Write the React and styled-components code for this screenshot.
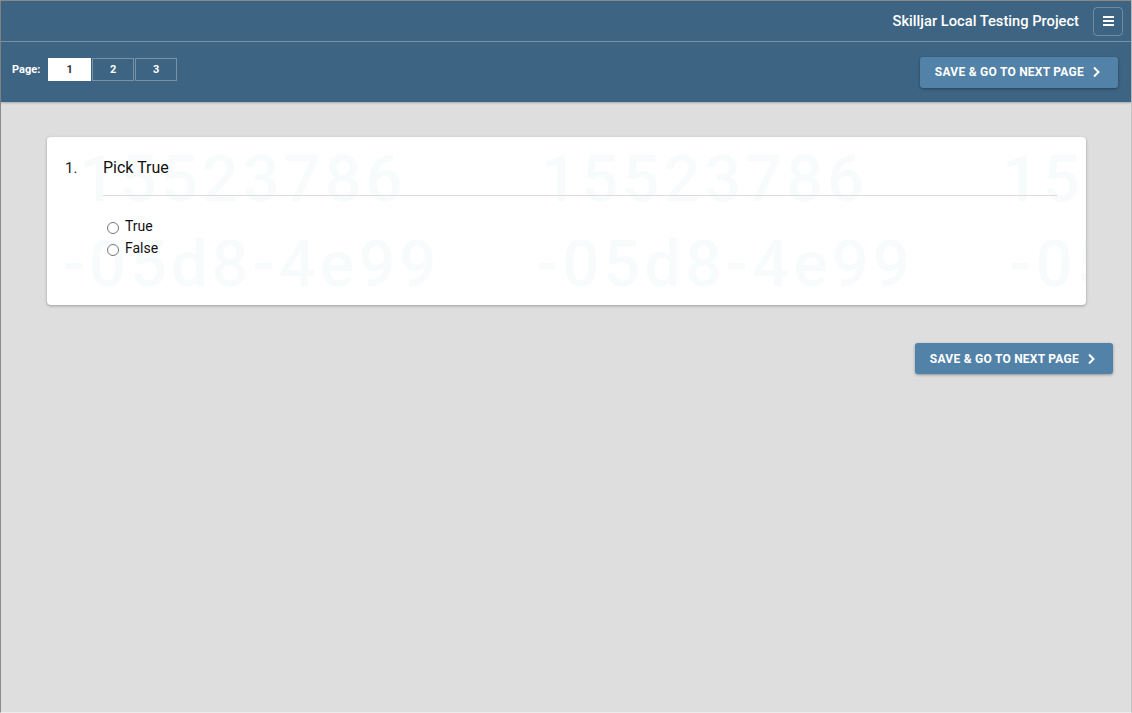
import React from 'react';
import styled, { createGlobalStyle } from 'styled-components';

const GlobalStyle = createGlobalStyle`
  html, body {
    margin: 0;
    padding: 0;
    background: #dedede;
  }
  body {
    font-family: Roboto, "Liberation Sans", Arial, sans-serif;
  }
`;

const Frame = styled.div`
  box-sizing: border-box;
  min-height: 713px;
  border-top: 1px solid #8c8c8c;
  border-left: 1px solid #8c8c8c;
  border-right: 1px solid #c4c4c4;
  border-bottom: 1px solid #ececec;
  background: #dedede;
`;

const Header = styled.header`
  background: #3d6483;
  box-shadow: 0 1px 2px rgba(0, 0, 0, 0.25);
`;

const TopBar = styled.div`
  height: 40px;
  display: flex;
  align-items: center;
  justify-content: flex-end;
  gap: 14px;
  padding-right: 8px;
  border-bottom: 1px solid #7392aa;
`;

const Title = styled.div`
  color: #fff;
  font-size: 14.7px;
  font-weight: 500;
`;

const MenuButton = styled.button`
  box-sizing: border-box;
  width: 30px;
  height: 29px;
  display: flex;
  flex-direction: column;
  align-items: center;
  justify-content: center;
  gap: 2px;
  padding: 0;
  background: transparent;
  border: 1px solid rgba(255, 255, 255, 0.25);
  border-radius: 4px;
  span {
    display: block;
    width: 11px;
    height: 2px;
    background: #fff;
  }
`;

const SubBar = styled.div`
  height: 60px;
  display: flex;
  align-items: center;
  justify-content: space-between;
  padding: 0 13px 0 11px;
`;

const Pager = styled.div`
  display: flex;
  align-items: center;
  margin-top: -6px;
`;

const PagerLabel = styled.span`
  color: #fff;
  font-size: 11px;
  font-weight: 700;
  margin-right: 8px;
`;

const PageButton = styled.button`
  box-sizing: border-box;
  width: ${(p) => (p.$active ? 43 : 42)}px;
  height: 23px;
  margin-right: 1px;
  padding: 0;
  font-family: inherit;
  font-size: 11px;
  font-weight: 700;
  color: ${(p) => (p.$active ? '#333' : '#fff')};
  background: ${(p) => (p.$active ? '#fff' : 'transparent')};
  border: 1px solid ${(p) => (p.$active ? '#fff' : 'rgba(255, 255, 255, 0.3)')};
`;

const SaveButton = styled.button`
  box-sizing: border-box;
  height: 31px;
  padding: 0 17px 0 15px;
  display: flex;
  align-items: center;
  gap: 8px;
  font-family: inherit;
  font-size: 12px;
  font-weight: 700;
  letter-spacing: 0.25px;
  color: #fff;
  text-transform: uppercase;
  background: #5282a7;
  border: none;
  border-radius: 3px;
  box-shadow: 0 1px 3px rgba(0, 0, 0, 0.35);
`;

const Main = styled.main`
  padding: 35px 45px 0 46px;
`;

const Card = styled.section`
  position: relative;
  overflow: hidden;
  background: #fff;
  border-radius: 4px;
  box-shadow: 0 1px 3px rgba(0, 0, 0, 0.3);
  padding: 21px 29px 46px 18px;
`;

const Watermark = styled.div`
  position: absolute;
  inset: 0;
  pointer-events: none;
  font-family: Roboto, "Liberation Sans", sans-serif;
  font-size: 65px;
  font-weight: 500;
  letter-spacing: 4px;
  color: #f8fbfc;
  white-space: nowrap;
  line-height: 1;
`;

const MarkRow = styled.div`
  display: flex;
  gap: ${(p) => p.$gap}px;
  margin-left: ${(p) => p.$offset}px;
  margin-top: ${(p) => p.$top}px;
`;

const Content = styled.div`
  position: relative;
`;

const QuestionRow = styled.div`
  display: flex;
  align-items: baseline;
`;

const Number = styled.div`
  width: 38px;
  font-size: 15px;
  color: #222;
`;

const QuestionBody = styled.div`
  flex: 1;
`;

const Prompt = styled.div`
  font-size: 16px;
  color: #111;
  padding-bottom: 18px;
  border-bottom: 1px solid #dcdcdc;
`;

const Options = styled.div`
  display: flex;
  flex-direction: column;
  padding: 19px 0 0 1px;
`;

const Option = styled.label`
  display: flex;
  align-items: center;
  gap: 6px;
  height: 22px;
  font-size: 14px;
  color: #111;
  input {
    margin: 3px 0 0 3px;
    width: 12px;
    height: 12px;
  }
`;

const Footer = styled.div`
  display: flex;
  justify-content: flex-end;
  padding: 38px 0 0;
  margin-right: -27px;
`;

const Chevron = () => (
  <svg width="9" height="12" viewBox="0 0 9 12" fill="none">
    <path d="M2 1.5 L6.5 6 L2 10.5" stroke="#fff" strokeWidth="2" />
  </svg>
);

const App = () => (
  <Frame>
    <GlobalStyle />
    <Header>
      <TopBar>
        <Title>Skilljar Local Testing Project</Title>
        <MenuButton aria-label="menu">
          <span />
          <span />
          <span />
        </MenuButton>
      </TopBar>
      <SubBar>
        <Pager>
          <PagerLabel>Page:</PagerLabel>
          <PageButton $active>1</PageButton>
          <PageButton>2</PageButton>
          <PageButton>3</PageButton>
        </Pager>
        <SaveButton>
          Save &amp; Go to Next Page <Chevron />
        </SaveButton>
      </SubBar>
    </Header>
    <Main>
      <Card>
        <Watermark>
          <MarkRow $offset={32} $gap={134} $top={10}>
            <span>15523786</span>
            <span>15523786</span>
            <span>15523786</span>
          </MarkRow>
          <MarkRow $offset={16} $gap={96} $top={20}>
            <span>-05d8-4e99</span>
            <span>-05d8-4e99</span>
            <span>-05d8-4e99</span>
          </MarkRow>
        </Watermark>
        <Content>
          <QuestionRow>
            <Number>1.</Number>
            <QuestionBody>
              <Prompt>Pick True</Prompt>
              <Options>
                <Option>
                  <input type="radio" name="q1" />
                  True
                </Option>
                <Option>
                  <input type="radio" name="q1" />
                  False
                </Option>
              </Options>
            </QuestionBody>
          </QuestionRow>
        </Content>
      </Card>
      <Footer>
        <SaveButton>
          Save &amp; Go to Next Page <Chevron />
        </SaveButton>
      </Footer>
    </Main>
  </Frame>
);

export default App;
